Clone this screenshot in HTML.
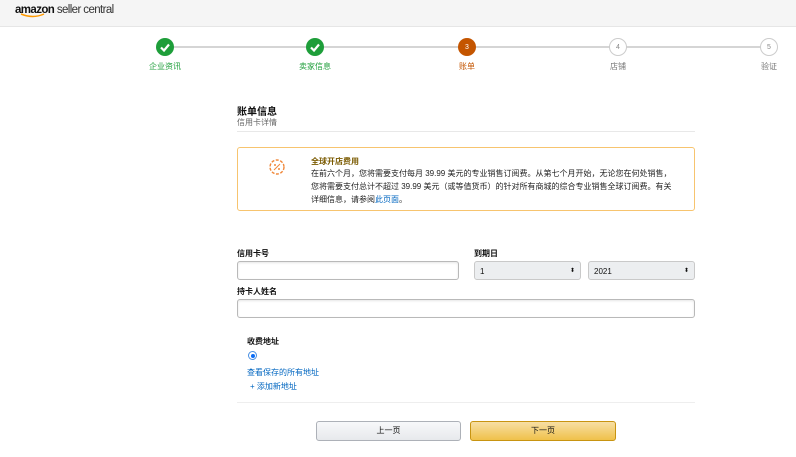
<!DOCTYPE html>
<html><head><meta charset="utf-8"><style>
*{margin:0;padding:0;box-sizing:border-box}
body{width:796px;height:457px;background:#fff;font-family:"Liberation Sans","Noto Sans CJK SC",sans-serif;position:relative;overflow:hidden;color:#111}
.a{position:absolute}
.hdr{left:0;top:0;width:796px;height:27px;background:#f5f5f5;border-bottom:1px solid #e6e6e6}
.line{top:46px;height:2px;background:#d5d5d5}
.c{width:18px;height:18px;border-radius:50%;top:38px;font-size:7px;display:flex;align-items:center;justify-content:center;line-height:1}
.lbl{top:61px;font-size:8px;width:60px;text-align:center}
.in{border:1px solid #b9b9b9;border-radius:3px;height:19px;box-shadow:inset 0 1px 2px rgba(0,0,0,.1)}
.sel{background:#eceef0;border:1px solid #c9c9c9;border-radius:3px;height:19px;font-size:8px;padding:5px 5px;}
.lb{font-size:8px;font-weight:bold}
</style></head><body>
<div class="a hdr"></div>
<div class="a" style="left:15px;top:4px;font-size:11.5px;letter-spacing:-0.6px"><b>amazon</b> <span style="color:#333">seller central</span></div>
<svg class="a" style="left:20px;top:13px" width="26" height="6"><path d="M1 1 Q13 6 24 1" stroke="#f90" stroke-width="1.5" fill="none"/></svg>
<div class="a line" style="left:165px;width:604px"></div>
<div class="a c" style="left:156px;background:#1e9e3a"><svg width="18" height="18"><path d="M5 9.5l3 3 5-6" stroke="#fff" stroke-width="2.2" fill="none"/></svg></div>
<div class="a c" style="left:306px;background:#1e9e3a"><svg width="18" height="18"><path d="M5 9.5l3 3 5-6" stroke="#fff" stroke-width="2.2" fill="none"/></svg></div>
<div class="a c" style="left:458px;background:#c45500;color:#fff">3</div>
<div class="a c" style="left:609px;background:#fff;border:1.5px solid #ccc;color:#888">4</div>
<div class="a c" style="left:760px;background:#fff;border:1.5px solid #ccc;color:#888">5</div>
<div class="a lbl" style="left:135px;color:#1e9e3a">企业资讯</div>
<div class="a lbl" style="left:285px;color:#1e9e3a">卖家信息</div>
<div class="a lbl" style="left:437px;color:#c45500">账单</div>
<div class="a lbl" style="left:588px;color:#777">店铺</div>
<div class="a lbl" style="left:739px;color:#777">验证</div>
<div class="a" style="left:237px;top:103px;font-size:10px;font-weight:bold">账单信息</div>
<div class="a" style="left:237px;top:117px;font-size:8px;color:#666">信用卡详情</div>
<div class="a" style="left:237px;top:131px;width:458px;height:1px;background:#e8e8e8"></div>
<div class="a" style="left:237px;top:147px;width:458px;height:64px;border:1px solid #f7c46f;border-radius:3px"></div>
<svg class="a" style="left:266px;top:156px" width="22" height="22"><circle cx="11" cy="11" r="7" fill="none" stroke="#f0883a" stroke-width="1.4" stroke-dasharray="3 1.5"/><path d="M8 14l6-6" stroke="#f0883a" stroke-width="1"/><circle cx="9" cy="9" r="1" fill="#f0883a"/><circle cx="13" cy="13" r="1" fill="#f0883a"/></svg>
<div class="a" style="left:311px;top:156px;font-size:8px;font-weight:bold;color:#7a5a00">全球开店费用</div>
<div class="a" style="left:311px;top:167px;width:362px;font-size:8px;line-height:13px;color:#222">在前六个月，您将需要支付每月 39.99 美元的专业销售订阅费。从第七个月开始，无论您在何处销售，您将需要支付总计不超过 39.99 美元（或等值货币）的针对所有商城的综合专业销售全球订阅费。有关详细信息，请参阅<span style="color:#0066c0">此页面</span>。</div>
<div class="a lb" style="left:237px;top:248px">信用卡号</div>
<div class="a in" style="left:237px;top:261px;width:222px"></div>
<div class="a lb" style="left:474px;top:248px">到期日</div>
<div class="a sel" style="left:474px;top:261px;width:107px">1<span style="float:right;font-size:6px">⬍</span></div>
<div class="a sel" style="left:588px;top:261px;width:107px">2021<span style="float:right;font-size:6px">⬍</span></div>
<div class="a lb" style="left:237px;top:286px">持卡人姓名</div>
<div class="a in" style="left:237px;top:299px;width:458px"></div>
<div class="a lb" style="left:247px;top:336px">收费地址</div>
<div class="a" style="left:248px;top:351px;width:9px;height:9px;border-radius:50%;border:1px solid #4a90e2;background:#fff"><div style="margin:1.5px;width:4px;height:4px;border-radius:50%;background:#0a6cf5"></div></div>
<div class="a" style="left:247px;top:367px;font-size:8px;color:#0066c0">查看保存的所有地址</div>
<div class="a" style="left:250px;top:381px;font-size:8px;color:#0066c0">+ 添加新地址</div>
<div class="a" style="left:237px;top:402px;width:458px;height:1px;background:#eee"></div>
<div class="a" style="left:316px;top:421px;width:145px;height:20px;border:1px solid #adb1b8;border-radius:3px;background:linear-gradient(#f7f8fa,#e7e9ec);font-size:8px;text-align:center;line-height:18px">上一页</div>
<div class="a" style="left:470px;top:421px;width:146px;height:20px;border:1px solid #c89411;border-radius:3px;background:linear-gradient(#f7dfa5,#f0c14b);font-size:8px;text-align:center;line-height:18px">下一页</div>
</body></html>
